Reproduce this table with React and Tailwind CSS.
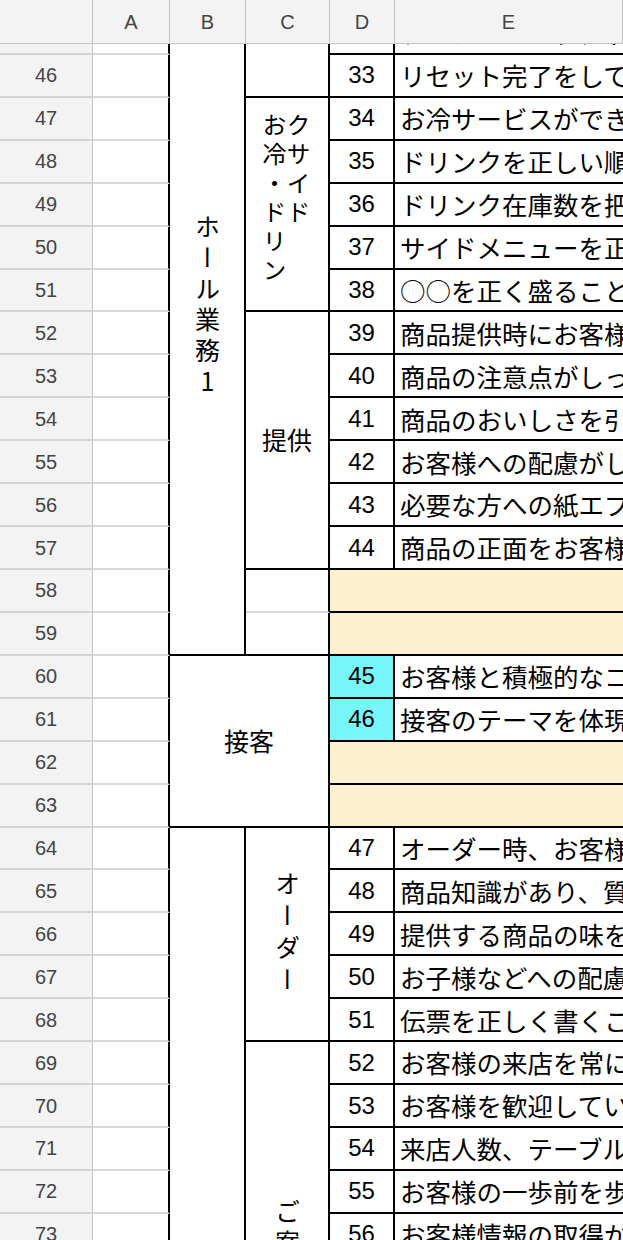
const COLS = "grid grid-cols-[93px_77px_76px_84px_65px_1fr]";
const JP = "font-['Noto_Sans_CJK_JP',sans-serif]";

const ROWS = [
  { n: 45, d: "32", e: "テーブルのセッティングができる", b: { cls: "row-span-15", kind: "hall" }, c: { cls: "row-span-2 border-b-black" } },
  { n: 46, d: "33", e: "リセット完了をしている" },
  { n: 47, d: "34", e: "お冷サービスができる", c: { cls: "row-span-5 border-b-black", kind: "drink" } },
  { n: 48, d: "35", e: "ドリンクを正しい順番に出せる" },
  { n: 49, d: "36", e: "ドリンク在庫数を把握している" },
  { n: 50, d: "37", e: "サイドメニューを正しく作れる" },
  { n: 51, d: "38", e: "○○を正く盛ることができる" },
  { n: 52, d: "39", e: "商品提供時にお客様へ声掛けができる", c: { cls: "row-span-6 border-b-black", text: "提供" } },
  { n: 53, d: "40", e: "商品の注意点がしっかり言える" },
  { n: 54, d: "41", e: "商品のおいしさを引き立てる説明ができる" },
  { n: 55, d: "42", e: "お客様への配慮がしっかりできる" },
  { n: 56, d: "43", e: "必要な方への紙エプロンの提供ができる" },
  { n: 57, d: "44", e: "商品の正面をお客様に向けて置ける" },
  { n: 58, blank: true, c: { cls: "border-b-[#d4d4d4]" } },
  { n: 59, blank: true, c: { cls: "border-b-black" } },
  { n: 60, d: "45", e: "お客様と積極的なコミュニケーションがとれる", cyan: true, b: { cls: "col-span-2 row-span-4", text: "接客" } },
  { n: 61, d: "46", e: "接客のテーマを体現できる", cyan: true },
  { n: 62, blank: true },
  { n: 63, blank: true },
  { n: 64, d: "47", e: "オーダー時、お客様の目を見て話せる", b: { cls: "row-span-10" }, c: { cls: "row-span-5 border-b-black", kind: "order" } },
  { n: 65, d: "48", e: "商品知識があり、質問に答えられる" },
  { n: 66, d: "49", e: "提供する商品の味を説明できる" },
  { n: 67, d: "50", e: "お子様などへの配慮ができる" },
  { n: 68, d: "51", e: "伝票を正しく書くことができる" },
  { n: 69, d: "52", e: "お客様の来店を常に意識している", c: { cls: "row-span-5 border-b-black", kind: "guide" } },
  { n: 70, d: "53", e: "お客様を歓迎している" },
  { n: 71, d: "54", e: "来店人数、テーブルの状況を把握できる" },
  { n: 72, d: "55", e: "お客様の一歩前を歩いて案内できる" },
  { n: 73, d: "56", e: "お客様情報の取得ができる" },
];

const Merged = ({ kind, text }) => {
  switch (kind) {
    case "hall":
      return (
        <div className="h-full flex justify-center pt-[202px]">
          <div className="[writing-mode:vertical-rl] [text-orientation:upright] tracking-[6px] leading-[25px] h-[200px] shrink-0">
            ホール業務1
          </div>
        </div>
      );
    case "drink":
      return (
        <div className="h-full flex items-center justify-center pr-[2px] pb-[6px]">
          <div className="[writing-mode:vertical-lr] [text-orientation:upright] tracking-[5px] leading-[24px] text-[24px] h-[176px] shrink-0">
            お冷・ドリン
            <br />
            クサイド
          </div>
        </div>
      );
    case "order":
      return (
        <div className="h-full flex items-center justify-center pt-[2px]">
          <div className="[writing-mode:vertical-rl] [text-orientation:upright] tracking-[7px] leading-[25px] shrink-0">
            オーダー
          </div>
        </div>
      );
    case "guide":
      return (
        <div className="h-full flex flex-col items-center pt-[157px] overflow-hidden">
          <div className="[writing-mode:vertical-rl] [text-orientation:upright] tracking-[6px] leading-[25px] h-[120px] shrink-0">
            ご案内
          </div>
        </div>
      );
    default:
      return text ? (
        <div className="h-full flex items-center justify-center">{text}</div>
      ) : null;
  }
};

const Row = ({ r }) => (
  <>
    <div className="flex items-center justify-center bg-[#f3f3f3] border-r border-r-[#c4c4c4] border-b-2 border-b-[#d4d4d4] text-[20px] text-[#444]">
      {r.n}
    </div>
    <div className="border-b-2 border-b-[#d9d9d9] border-r-2 border-r-black" />
    {r.b && (
      <div className={`border-r-2 border-b-2 border-black text-[25px] ${JP} ${r.b.cls}`}>
        <Merged kind={r.b.kind} text={r.b.text} />
      </div>
    )}
    {r.c && (
      <div className={`border-r-2 border-r-black border-b-2 text-[25px] ${JP} ${r.c.cls}`}>
        <Merged kind={r.c.kind} text={r.c.text} />
      </div>
    )}
    {r.blank ? (
      <div className="col-span-2 bg-[#fdf0d0] border-b-2 border-black" />
    ) : (
      <>
        <div
          className={`flex items-center justify-center border-r-2 border-b-2 border-black ${
            r.cyan ? "bg-[#76f6f8]" : ""
          }`}
        >
          {r.d}
        </div>
        <div className={`flex items-center pl-[5px] border-b-2 border-black whitespace-nowrap overflow-hidden text-[25.5px] ${JP}`}>
          {r.e}
        </div>
      </>
    )}
  </>
);

export default function App() {
  return (
    <div className="w-[623px] h-[1240px] overflow-hidden bg-white text-black text-[24px] font-['Liberation_Sans','Noto_Sans_CJK_JP',sans-serif]">
      <div className={`${COLS} h-[44px] bg-[#f3f3f3] border-b border-b-[#c4c4c4] text-[20px] text-[#444]`}>
        <div className="border-r border-[#c4c4c4]" />
        {["A", "B", "C", "D", "E"].map((l) => (
          <div key={l} className="flex items-center justify-center border-r border-[#c4c4c4]">
            {l}
          </div>
        ))}
      </div>
      <div className="h-[1196px] overflow-hidden">
        <div className={`${COLS} grid-rows-[repeat(29,42.93px)] mt-[-32px]`}>
          {ROWS.map((r) => (
            <Row key={r.n} r={r} />
          ))}
        </div>
      </div>
    </div>
  );
}
